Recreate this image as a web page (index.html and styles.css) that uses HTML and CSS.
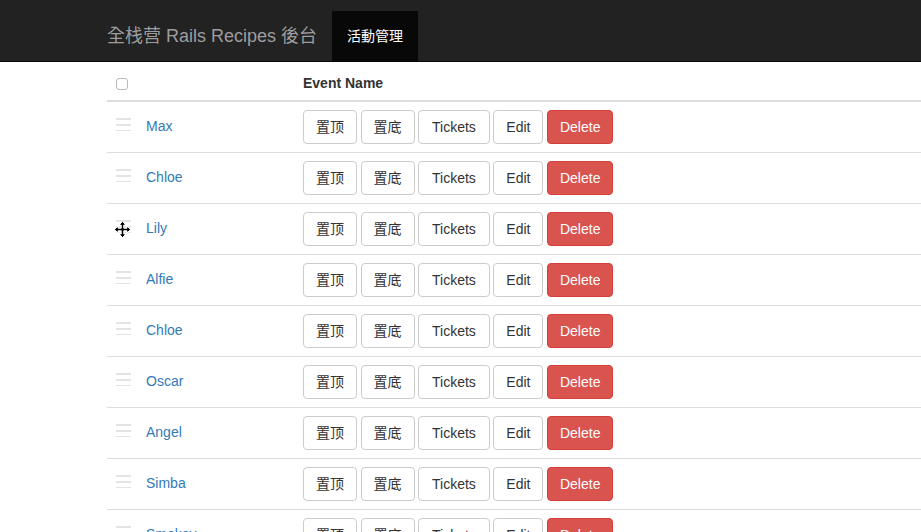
FILE: index.html
```html
<!DOCTYPE html>
<html lang="zh-Hant">
<head>
<meta charset="utf-8">
<title>Rails Recipes 後台</title>
<link rel="stylesheet" href="styles.css">
</head>
<body>
<header class="navbar">
  <div class="nav-inner">
    <a class="brand" href="#">全栈营 Rails Recipes 後台</a>
    <a class="nav-item active" href="#">活動管理</a>
  </div>
</header>
<main class="container">
  <div class="table">
    <div class="row head">
      <div class="cell handle"><span class="checkbox"></span></div>
      <div class="cell name"></div>
      <div class="cell actions th">Event Name</div>
    </div>
    <div class="row">
      <div class="cell handle"><span class="bars"></span></div>
      <div class="cell name"><a href="#">Max</a></div>
      <div class="cell actions"><a class="btn">置顶</a> <a class="btn">置底</a> <a class="btn wide">Tickets</a> <a class="btn">Edit</a> <a class="btn danger">Delete</a></div>
    </div>
    <div class="row">
      <div class="cell handle"><span class="bars"></span></div>
      <div class="cell name"><a href="#">Chloe</a></div>
      <div class="cell actions"><a class="btn">置顶</a> <a class="btn">置底</a> <a class="btn wide">Tickets</a> <a class="btn">Edit</a> <a class="btn danger">Delete</a></div>
    </div>
    <div class="row">
      <div class="cell handle"><span class="bars"></span>
        <svg class="cursor" width="17" height="17" viewBox="0 0 17 17"><path d="M8.5 0.5 L12 4 L9.8 4 L9.8 7.2 L13 7.2 L13 5 L16.5 8.5 L13 12 L13 9.8 L9.8 9.8 L9.8 13 L12 13 L8.5 16.5 L5 13 L7.2 13 L7.2 9.8 L4 9.8 L4 12 L0.5 8.5 L4 5 L4 7.2 L7.2 7.2 L7.2 4 L5 4 Z" fill="#000" stroke="#fff" stroke-width="1"/></svg>
      </div>
      <div class="cell name"><a href="#">Lily</a></div>
      <div class="cell actions"><a class="btn">置顶</a> <a class="btn">置底</a> <a class="btn wide">Tickets</a> <a class="btn">Edit</a> <a class="btn danger">Delete</a></div>
    </div>
    <div class="row">
      <div class="cell handle"><span class="bars"></span></div>
      <div class="cell name"><a href="#">Alfie</a></div>
      <div class="cell actions"><a class="btn">置顶</a> <a class="btn">置底</a> <a class="btn wide">Tickets</a> <a class="btn">Edit</a> <a class="btn danger">Delete</a></div>
    </div>
    <div class="row">
      <div class="cell handle"><span class="bars"></span></div>
      <div class="cell name"><a href="#">Chloe</a></div>
      <div class="cell actions"><a class="btn">置顶</a> <a class="btn">置底</a> <a class="btn wide">Tickets</a> <a class="btn">Edit</a> <a class="btn danger">Delete</a></div>
    </div>
    <div class="row">
      <div class="cell handle"><span class="bars"></span></div>
      <div class="cell name"><a href="#">Oscar</a></div>
      <div class="cell actions"><a class="btn">置顶</a> <a class="btn">置底</a> <a class="btn wide">Tickets</a> <a class="btn">Edit</a> <a class="btn danger">Delete</a></div>
    </div>
    <div class="row">
      <div class="cell handle"><span class="bars"></span></div>
      <div class="cell name"><a href="#">Angel</a></div>
      <div class="cell actions"><a class="btn">置顶</a> <a class="btn">置底</a> <a class="btn wide">Tickets</a> <a class="btn">Edit</a> <a class="btn danger">Delete</a></div>
    </div>
    <div class="row">
      <div class="cell handle"><span class="bars"></span></div>
      <div class="cell name"><a href="#">Simba</a></div>
      <div class="cell actions"><a class="btn">置顶</a> <a class="btn">置底</a> <a class="btn wide">Tickets</a> <a class="btn">Edit</a> <a class="btn danger">Delete</a></div>
    </div>
    <div class="row">
      <div class="cell handle"><span class="bars"></span></div>
      <div class="cell name"><a href="#">Smokey</a></div>
      <div class="cell actions"><a class="btn">置顶</a> <a class="btn">置底</a> <a class="btn wide">Tickets</a> <a class="btn">Edit</a> <a class="btn danger">Delete</a></div>
    </div>
  </div>
</main>
</body>
</html>
```

FILE: styles.css
```css
* { box-sizing: border-box; }
html, body { margin: 0; padding: 0; }
body {
  width: 921px;
  height: 532px;
  overflow: hidden;
  background: #fff;
  font-family: "Liberation Sans", "Noto Sans CJK TC", Arial, sans-serif;
  font-size: 14px;
  line-height: 20px;
  color: #333;
}
a { text-decoration: none; }

.navbar {
  background: #222;
  height: 62px;
  padding-top: 11px;
  border-bottom: 1px solid #080808;
}
.nav-inner {
  display: flex;
  align-items: stretch;
  height: 50px;
  padding-left: 107px;
}
.brand {
  display: flex;
  align-items: center;
  font-size: 18px;
  color: #9d9d9d;
  padding-right: 15px;
}
.nav-item {
  display: flex;
  align-items: center;
  padding: 0 15px;
  color: #9d9d9d;
  font-size: 14px;
}
.nav-item.active {
  background: #080808;
  color: #fff;
}

.container {
  padding-left: 107px;
}
.table {
  width: 814px;
}
.row {
  display: flex;
  border-top: 1px solid #ddd;
}
.row.head {
  border-top: none;
  border-bottom: 2px solid #ddd;
  height: 40px;
}
.row.head + .row { border-top: none; }
.cell {
  padding: 8px;
  display: flex;
  align-items: center;
  position: relative;
}
.cell.handle { width: 31px; padding: 8px 0 8px 9px; }
.cell.name { width: 157px; padding-left: 8px; }
.cell.name a { color: #337ab7; margin-top: -2px; }
.cell.actions { flex: 1; gap: 3.5px; }
.row.head .cell { padding-top: 11px; padding-bottom: 7px; }
.th { font-weight: bold; }

.checkbox {
  display: block;
  width: 12px;
  height: 12px;
  border: 1px solid #b9b9b9;
  border-radius: 3px;
  background: #fff;
  margin-top: 2px;
}
.bars {
  display: block;
  width: 15px;
  height: 13px;
  margin-top: -5px;
  background:
    linear-gradient(#e3e3e3, #e3e3e3) 0 0 / 15px 2px no-repeat,
    linear-gradient(#e3e3e3, #e3e3e3) 0 6px / 15px 2px no-repeat,
    linear-gradient(#e3e3e3, #e3e3e3) 0 12px / 15px 1px no-repeat;
}
.cursor {
  position: absolute;
  left: 7px;
  top: 17px;
}

.btn {
  display: inline-block;
  padding: 6px 12px;
  font-size: 14px;
  line-height: 20px;
  border: 1px solid #ccc;
  border-radius: 4px;
  background: #fff;
  color: #333;
  white-space: nowrap;
}
.btn.wide { padding: 6px 13px; }
.btn.danger {
  background: #d9534f;
  border-color: #d43f3a;
  color: #fff;
}
```
